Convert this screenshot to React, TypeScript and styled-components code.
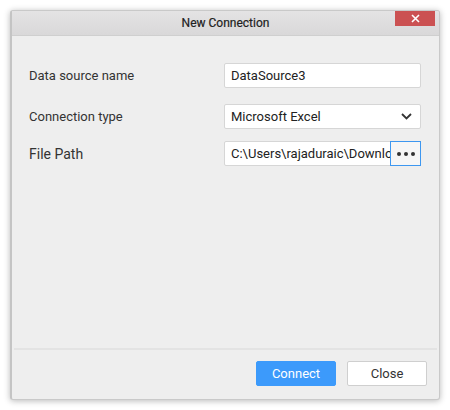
import React from "react";
import styled, { createGlobalStyle } from "styled-components";

const Global = createGlobalStyle`
  html, body { margin: 0; padding: 0; background: #ffffff; }
  body { font-family: Roboto, "Noto Sans", sans-serif; }
  * { box-sizing: border-box; }
`;

const Page = styled.div`
  width: 450px;
  height: 410px;
  padding: 10px 10px 10px 10px;
`;

const Dialog = styled.div`
  width: 430px;
  height: 390px;
  display: flex;
  flex-direction: column;
  background: #eeeeee;
  border: 1px solid #c9c9c9;
  border-left: 2px solid #c4c4c4;
  border-radius: 3px;
  box-shadow: 0 1px 6px rgba(0, 0, 0, 0.28);
  overflow: hidden;
`;

const TitleBar = styled.div`
  position: relative;
  height: 25px;
  flex: 0 0 25px;
  display: flex;
  align-items: center;
  justify-content: center;
  background: linear-gradient(#e4e3e4, #d9d8d9);
  border-bottom: 1px solid #cfcfcf;
  font-size: 12px;
  font-weight: 400;
  color: #222222;
  -webkit-text-stroke: 0.2px #222222;
`;

const CloseX = styled.button`
  position: absolute;
  top: -1px;
  right: 4px;
  width: 40px;
  height: 16px;
  border: none;
  padding: 0;
  background: #cb5152;
  color: #ffffff;
  display: flex;
  align-items: center;
  justify-content: center;
`;

const Body = styled.div`
  flex: 1;
  display: flex;
  flex-direction: column;
  padding: 27px 17px 0 17px;
`;

const Row = styled.div<{ $space?: number }>`
  display: flex;
  align-items: center;
  justify-content: space-between;
  height: 25px;
  margin-top: ${(p) => p.$space ?? 0}px;
`;

const Label = styled.div<{ $large?: boolean }>`
  font-size: ${(p) => (p.$large ? 14 : 13)}px;
  color: #333333;
`;

const Field = styled.div`
  width: 197px;
  height: 25px;
  display: flex;
  align-items: center;
  background: #ffffff;
  border: 1px solid #d6d6d6;
  border-radius: 2px;
  font-size: 13px;
  color: #222222;
  margin-right: 1px;
`;

const FieldText = styled.div`
  flex: 1;
  min-width: 0;
  padding-left: 6px;
  white-space: nowrap;
  overflow: hidden;
`;

const Chevron = styled.div`
  width: 28px;
  display: flex;
  justify-content: center;
  align-items: center;
`;

const Browse = styled.div`
  flex: 0 0 31px;
  width: 31px;
  height: 25px;
  margin: -1px -1px -1px 0;
  border: 1px solid #3d97f0;
  background: #f6f6f6;
  display: flex;
  align-items: center;
  justify-content: center;
  gap: 3px;
`;

const Dot = styled.span`
  width: 4px;
  height: 4px;
  border-radius: 50%;
  background: #333333;
`;

const Footer = styled.div`
  flex: 0 0 51px;
  margin: 0 2px;
  border-top: 2px solid #e3e3e3;
  display: flex;
  justify-content: flex-end;
  align-items: flex-start;
  gap: 11px;
  padding: 11px 10px 0 0;
`;

const Button = styled.button<{ $primary?: boolean }>`
  width: 80px;
  height: 25px;
  border-radius: 2px;
  font-family: Roboto, "Noto Sans", sans-serif;
  font-size: 13px;
  padding: 0;
  background: ${(p) => (p.$primary ? "#3c9afb" : "#ffffff")};
  color: ${(p) => (p.$primary ? "#ffffff" : "#333333")};
  border: 1px solid ${(p) => (p.$primary ? "#3c9afb" : "#cfcfcf")};
`;

export default function App() {
  return (
    <>
      <Global />
      <Page>
        <Dialog>
          <TitleBar>
            New Connection
            <CloseX>
              <svg width="9" height="9" viewBox="0 0 9 9">
                <path d="M1 1 L8 8 M8 1 L1 8" stroke="#fff" strokeWidth="1.6" />
              </svg>
            </CloseX>
          </TitleBar>
          <Body>
            <Row>
              <Label>Data source name</Label>
              <Field>
                <FieldText>DataSource3</FieldText>
              </Field>
            </Row>
            <Row $space={16}>
              <Label>Connection type</Label>
              <Field>
                <FieldText>Microsoft Excel</FieldText>
                <Chevron>
                  <svg width="11" height="7" viewBox="0 0 11 7">
                    <path d="M1 1 L5.5 5.5 L10 1" stroke="#333" strokeWidth="1.8" fill="none" />
                  </svg>
                </Chevron>
              </Field>
            </Row>
            <Row $space={12}>
              <Label $large>File Path</Label>
              <Field>
                <FieldText>C:\Users\rajaduraic\Downloads\Sample.xlsx</FieldText>
                <Browse>
                  <Dot />
                  <Dot />
                  <Dot />
                </Browse>
              </Field>
            </Row>
          </Body>
          <Footer>
            <Button $primary>Connect</Button>
            <Button>Close</Button>
          </Footer>
        </Dialog>
      </Page>
    </>
  );
}
